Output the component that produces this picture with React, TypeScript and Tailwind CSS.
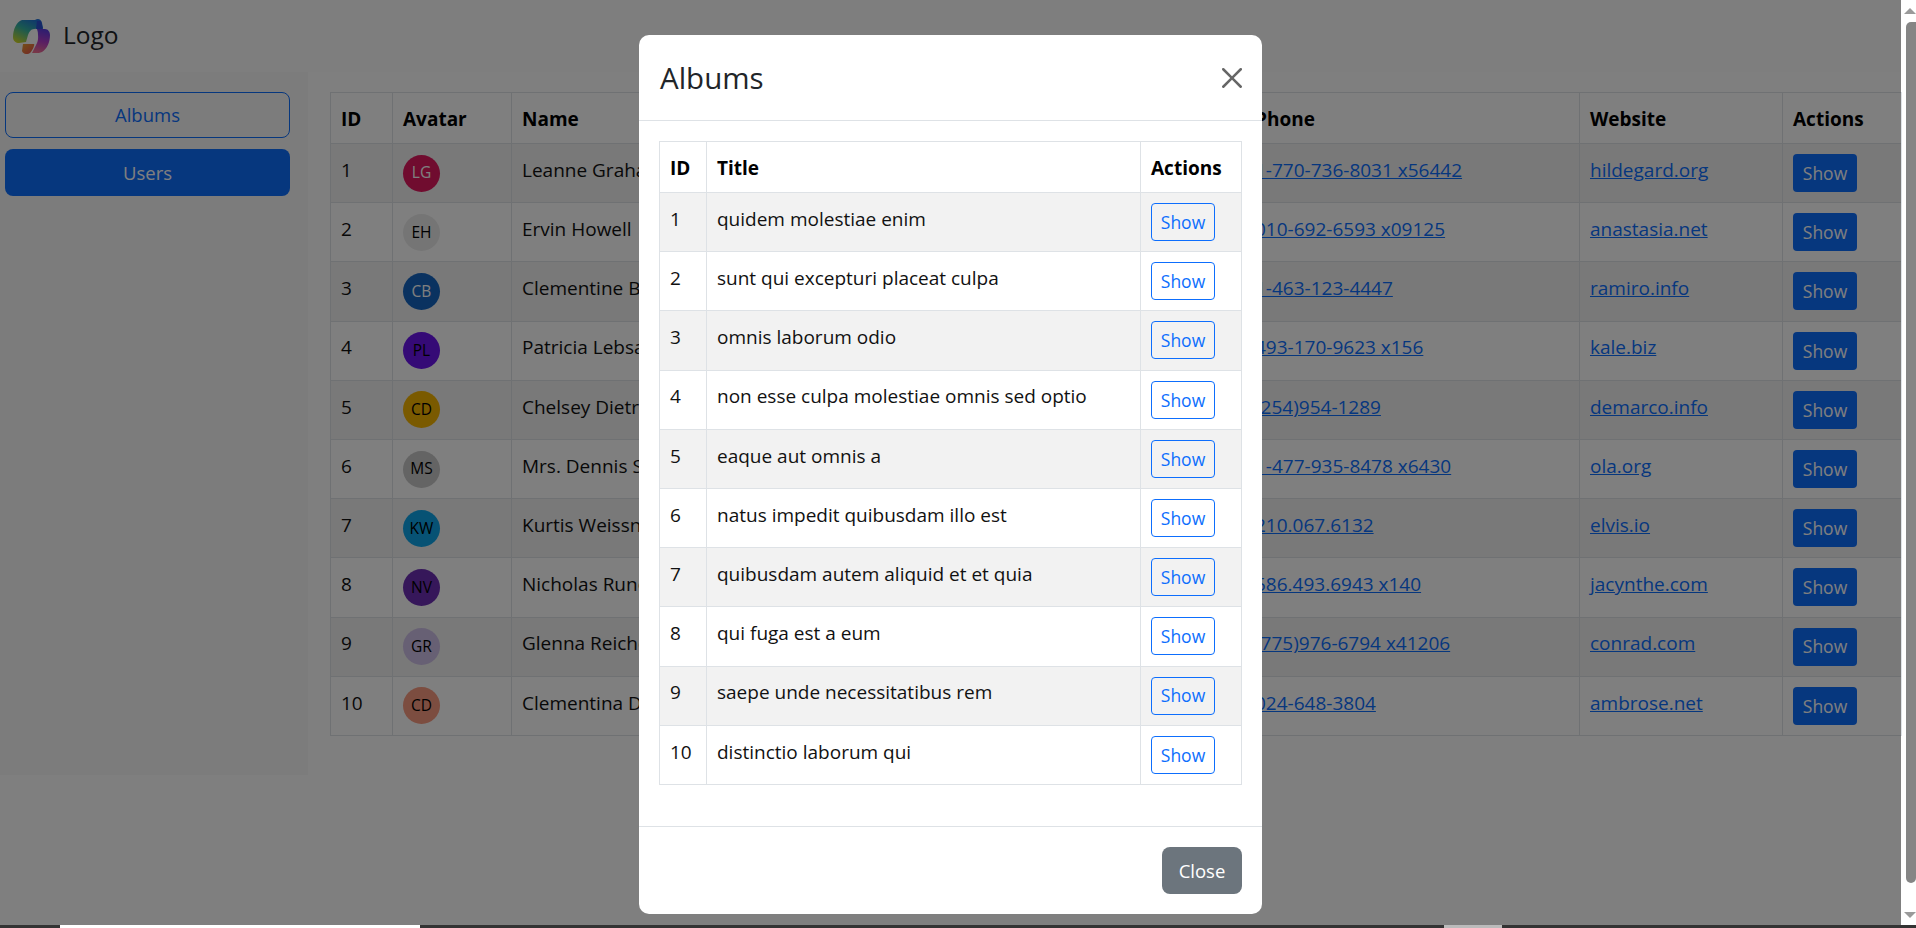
import React from "react";

const users = [
  ["1", "LG", "#e0185f", "text-white", "Leanne Graham", "Sincere@april.biz", "1-770-736-8031 x56442", "hildegard.org"],
  ["2", "EH", "#ebebeb", "text-black", "Ervin Howell", "Shanna@melissa.tv", "010-692-6593 x09125", "anastasia.net"],
  ["3", "CB", "#1565c0", "text-white", "Clementine Bauch", "Nathan@yesenia.net", "1-463-123-4447", "ramiro.info"],
  ["4", "PL", "#6a14ec", "text-black", "Patricia Lebsack", "Julianne.OConner@kory.org", "493-170-9623 x156", "kale.biz"],
  ["5", "CD", "#f5b400", "text-black", "Chelsey Dietrich", "Lucio_Hettinger@annie.ca", "(254)954-1289", "demarco.info"],
  ["6", "MS", "#c8c8c8", "text-black", "Mrs. Dennis Schulist", "Karley_Dach@jasper.info", "1-477-935-8478 x6430", "ola.org"],
  ["7", "KW", "#0ea5e9", "text-black", "Kurtis Weissnat", "Telly.Hoeger@billy.biz", "210.067.6132", "elvis.io"],
  ["8", "NV", "#6d2fb5", "text-black", "Nicholas Runolfsdottir V", "Sherwood@rosamond.me", "586.493.6943 x140", "jacynthe.com"],
  ["9", "GR", "#cfc0e8", "text-black", "Glenna Reichert", "Chaim_McDermott@dana.io", "(775)976-6794 x41206", "conrad.com"],
  ["10", "CD", "#f89a80", "text-black", "Clementina DuBuque", "Rey.Padberg@karina.biz", "024-648-3804", "ambrose.net"],
];

const albums = [
  "quidem molestiae enim",
  "sunt qui excepturi placeat culpa",
  "omnis laborum odio",
  "non esse culpa molestiae omnis sed optio",
  "eaque aut omnis a",
  "natus impedit quibusdam illo est",
  "quibusdam autem aliquid et et quia",
  "qui fuga est a eum",
  "saepe unde necessitatibus rem",
  "distinctio laborum qui",
];

function Logo() {
  return (
    <svg width="38" height="36" viewBox="0 0 38 36" className="shrink-0">
      <defs>
        <linearGradient id="lgA" x1="0.7" y1="0" x2="0.1" y2="1">
          <stop offset="0" stopColor="#1d6fd8" />
          <stop offset="0.45" stopColor="#35b3a0" />
          <stop offset="1" stopColor="#d8d820" />
        </linearGradient>
        <linearGradient id="lgB" x1="0.6" y1="0" x2="0.4" y2="1">
          <stop offset="0" stopColor="#5a3ce0" />
          <stop offset="0.5" stopColor="#b03cc8" />
          <stop offset="1" stopColor="#f07090" />
        </linearGradient>
        <linearGradient id="lgC" x1="0" y1="0" x2="1" y2="1">
          <stop offset="0" stopColor="#e8a030" />
          <stop offset="1" stopColor="#e84a50" />
        </linearGradient>
      </defs>
      <path d="M23 2c3-2 6-1 7 3l1 5-9 1c-3 0-5 3-6 6l-2 7-7 1c-3 0-6-2-6-6 0-7 3-15 9-17z" fill="url(#lgA)" />
      <path d="M25 11h8c3 0 5 3 5 6 0 7-3 14-8 17-2 1-4 1-7 1h-3l5-10c2-4 1-10 0-14z" fill="url(#lgB)" />
      <path d="M11 26h11c1 0-1 6-4 9-3 2-7 1-8-2z" fill="url(#lgC)" />
      <path d="M25 3l4 0 2 8-7 0z" fill="#2a4fd0" />
      <path d="M22 12h3c1 4 1 8-1 13h-7c1-5 2-11 5-13z" fill="#ffffff" />
    </svg>
  );
}

function App() {
  return (
    <div className="flex h-[928px] w-[1916px] flex-col overflow-hidden bg-white font-['Open_Sans',sans-serif] text-[16px] text-[#212529]">
      <div className="flex min-h-0 flex-1">
        <div className="relative min-w-0 flex-1">
          <header className="flex h-[72px] items-center gap-[13px] bg-[#fcfcfc] pl-[12px] pt-0">
            <Logo />
            <span className="pb-[2px] text-[24.5px] text-[#212529]">Logo</span>
          </header>
          <div className="flex">
            <aside className="flex h-[703px] w-[308px] shrink-0 flex-col gap-[11px] bg-[#f8f8f8] pl-[5px] pr-[18px] pt-[20px]">
              <button className="h-[46px] rounded-[8px] border border-[#0d6efd] text-[18.5px] text-[#0d6efd]">Albums</button>
              <button className="h-[47px] rounded-[8px] bg-[#0d6efd] text-[18.5px] text-white">Users</button>
            </aside>
            <main className="min-w-0 flex-1 pl-[22px] pt-[20px]">
              <table className="w-[1571px] table-fixed border-collapse text-[19px] text-[#111]">
                <colgroup>
                  <col className="w-[62px]" />
                  <col className="w-[119px]" />
                  <col className="w-[289px]" />
                  <col className="w-[444px]" />
                  <col className="w-[335px]" />
                  <col className="w-[203px]" />
                  <col className="w-[119px]" />
                </colgroup>
                <thead>
                  <tr className="h-[51px] border border-[#dee2e6] text-left font-bold text-black">
                    {["ID", "Avatar", "Name", "Email", "Phone", "Website", "Actions"].map((h) => (
                      <th key={h} className="border border-[#dee2e6] px-[10px] pb-0 pt-[2px]">{h}</th>
                    ))}
                  </tr>
                </thead>
                <tbody>
                  {users.map((u, i) => (
                    <tr key={u[0]} className={`h-[59.2px] ${i % 2 === 0 ? "bg-[#f2f2f2]" : "bg-white"}`}>
                      <td className="border border-[#dee2e6] px-[10px] pb-[6px] align-middle">{u[0]}</td>
                      <td className="border border-[#dee2e6] px-[10px] align-middle">
                        <span style={{ backgroundColor: u[2] }} className={`flex h-[37px] w-[37px] items-center justify-center rounded-full text-[15.5px] ${u[3]}`}>{u[1]}</span>
                      </td>
                      <td className="truncate border border-[#dee2e6] px-[10px] pb-[6px] align-middle">{u[4]}</td>
                      <td className="truncate border border-[#dee2e6] px-[10px] pb-[6px] align-middle">{u[5]}</td>
                      <td className="border border-[#dee2e6] px-[10px] pb-[6px] align-middle"><a className="text-[#0d6efd] underline">{u[6]}</a></td>
                      <td className="border border-[#dee2e6] px-[10px] pb-[6px] align-middle"><a className="text-[#0d6efd] underline">{u[7]}</a></td>
                      <td className="border border-[#dee2e6] px-[10px] align-middle">
                        <button className="h-[38px] w-[64px] rounded-[4px] bg-[#0d6efd] text-[17.5px] text-white">Show</button>
                      </td>
                    </tr>
                  ))}
                </tbody>
              </table>
            </main>
          </div>

          <div className="absolute inset-0 bg-black/50" />

          <div className="absolute left-[639px] top-[35px] flex h-[879px] w-[623px] flex-col rounded-[10px] bg-white">
            <div className="flex h-[86px] shrink-0 items-center justify-between border-b border-[#dee2e6] pl-[21px] pr-[20px]">
              <h5 className="text-[29.5px] font-medium leading-none text-[#212529]">Albums</h5>
              <svg width="20" height="20" viewBox="0 0 16 16" className="text-[#666]" fill="currentColor">
                <path d="M.293.293a1 1 0 0 1 1.414 0L8 6.586 14.293.293a1 1 0 1 1 1.414 1.414L9.414 8l6.293 6.293a1 1 0 0 1-1.414 1.414L8 9.414l-6.293 6.293a1 1 0 0 1-1.414-1.414L6.586 8 .293 1.707a1 1 0 0 1 0-1.414z" />
              </svg>
            </div>
            <div className="flex-1 px-[20px] pt-[20px]">
              <table className="w-[582px] table-fixed border-collapse text-[19px] text-[#111]">
                <colgroup>
                  <col className="w-[47px]" />
                  <col className="w-[434px]" />
                  <col className="w-[101px]" />
                </colgroup>
                <thead>
                  <tr className="h-[51px] text-left font-bold text-black">
                    {["ID", "Title", "Actions"].map((h) => (
                      <th key={h} className="border border-[#dee2e6] px-[10px] pb-0 pt-[2px]">{h}</th>
                    ))}
                  </tr>
                </thead>
                <tbody>
                  {albums.map((a, i) => (
                    <tr key={a} className={`h-[59.2px] ${i % 2 === 0 ? "bg-[#f2f2f2]" : "bg-white"}`}>
                      <td className="border border-[#dee2e6] px-[10px] pb-[6px] align-middle">{i + 1}</td>
                      <td className="border border-[#dee2e6] px-[10px] pb-[6px] align-middle">{a}</td>
                      <td className="border border-[#dee2e6] px-[10px] align-middle">
                        <button className="h-[38px] w-[64px] rounded-[4px] border border-[#0d6efd] text-[17.5px] text-[#0d6efd]">Show</button>
                      </td>
                    </tr>
                  ))}
                </tbody>
              </table>
            </div>
            <div className="flex h-[88px] shrink-0 items-start justify-end border-t border-[#dee2e6] pr-[20px] pt-[20px]">
              <button className="h-[47px] w-[80px] rounded-[8px] bg-[#6c757d] text-[18.5px] text-white">Close</button>
            </div>
          </div>
        </div>

        <div className="flex w-[15px] shrink-0 flex-col items-end bg-white">
          <svg width="12" height="6" viewBox="0 0 12 6" className="mt-[8px] shrink-0" fill="#9a9a9a"><path d="M6 0l6 6H0z" /></svg>
          <div className="mt-[8px] h-[861px] w-[10px] rounded-l-[5px] rounded-b-[5px] bg-[#858585]" />
          <svg width="12" height="6" viewBox="0 0 12 6" className="mt-[29px] shrink-0" fill="#9a9a9a"><path d="M0 0h12L6 6z" /></svg>
        </div>
      </div>
      <div className="flex h-[3px] shrink-0 bg-[#333]">
        <div className="ml-[60px] w-[360px] bg-white" />
        <div className="ml-[1024px] w-[58px] bg-[#bbb]" />
      </div>
    </div>
  );
}

export default App;
